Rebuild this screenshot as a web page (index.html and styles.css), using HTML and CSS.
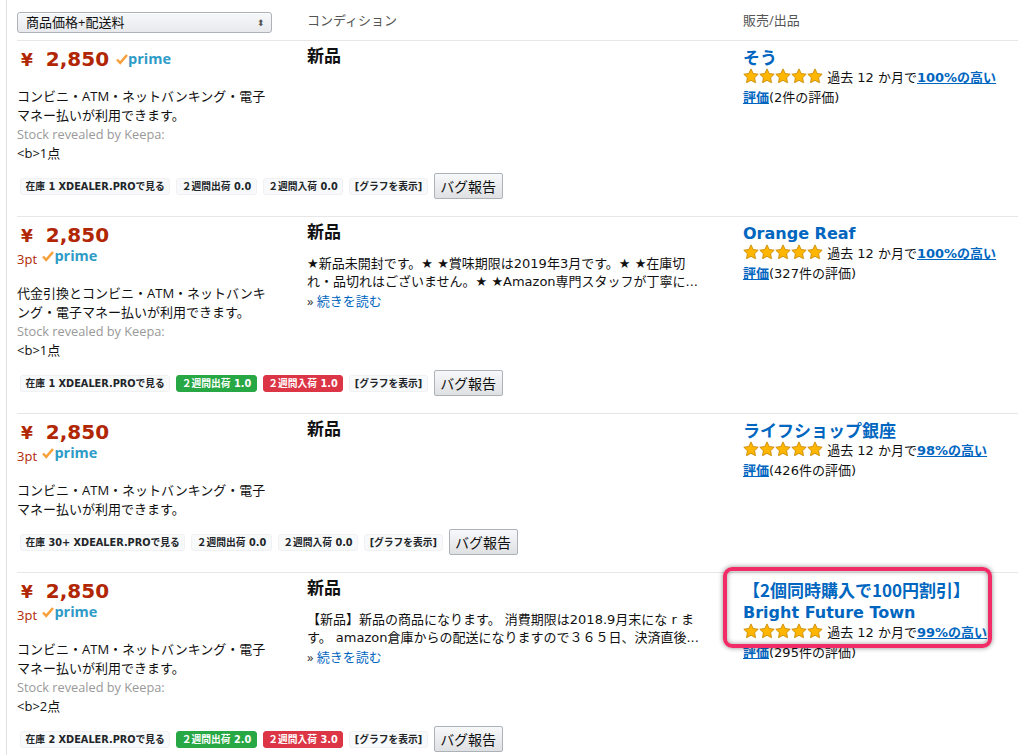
FILE: index.html
```html
<!DOCTYPE html>
<html lang="ja">
<head>
  <meta charset="UTF-8">
  <title>出品者一覧</title>
  <link rel="stylesheet" href="styles.css">
</head>
<body>
  <svg class="defs" width="0" height="0">
    <symbol id="star" viewBox="0 0 16 16">
      <path d="M8 .9l2.2 4.6 5 .7-3.6 3.5.9 5L8 12.3l-4.5 2.4.9-5L.8 6.2l5-.7z" fill="#ffb600" stroke="#c98a05" stroke-width=".9" stroke-linejoin="round"/>
    </symbol>
    <symbol id="check" viewBox="0 0 12 12">
      <path d="M1 6.5l3.2 3.4L11 2" fill="none" stroke="#f7a03c" stroke-width="2.5"/>
    </symbol>
  </svg>

  <div class="list">
    <div class="row head">
      <div class="col-price">
        <div class="sort"><span>商品価格+配送料</span><span class="sort-arrows">⬍</span></div>
      </div>
      <div class="col-cond">コンディション</div>
      <div class="col-seller">販売/出品</div>
    </div>

    <div class="row">
      <div class="col-price">
        <div class="price-line"><span class="price"><span class="yen">¥</span>2,850</span><span class="prime"><svg class="check"><use href="#check"/></svg>prime</span></div>
        <p class="desc first">コンビニ・ATM・ネットバンキング・電子<br>マネー払いが利用できます。</p>
        <p class="stock">Stock revealed by Keepa:</p>
        <p class="desc">&lt;b&gt;1点</p>
        <div class="tools">
          <span class="tag">在庫 1 XDEALER.PROで見る</span>
          <span class="tag">２週間出荷 0.0</span>
          <span class="tag">２週間入荷 0.0</span>
          <span class="tag">[グラフを表示]</span>
          <button class="bug">バグ報告</button>
        </div>
      </div>
      <div class="col-cond"><div class="cond">新品</div></div>
      <div class="col-seller">
        <a class="seller jp">そう</a>
        <div class="rating"><span class="stars"><svg><use href="#star"/></svg><svg><use href="#star"/></svg><svg><use href="#star"/></svg><svg><use href="#star"/></svg><svg><use href="#star"/></svg></span> 過去 12 か月で<a class="good">100%の高い評価</a>(2件の評価)</div>
      </div>
    </div>

    <div class="row">
      <div class="col-price">
        <div class="price-line"><span class="price"><span class="yen">¥</span>2,850</span></div>
        <div class="points">3pt <span class="prime"><svg class="check"><use href="#check"/></svg>prime</span></div>
        <p class="desc first">代金引換とコンビニ・ATM・ネットバンキ<br>ング・電子マネー払いが利用できます。</p>
        <p class="stock">Stock revealed by Keepa:</p>
        <p class="desc">&lt;b&gt;1点</p>
        <div class="tools">
          <span class="tag">在庫 1 XDEALER.PROで見る</span>
          <span class="tag green">２週間出荷 1.0</span>
          <span class="tag red">２週間入荷 1.0</span>
          <span class="tag">[グラフを表示]</span>
          <button class="bug">バグ報告</button>
        </div>
      </div>
      <div class="col-cond">
        <div class="cond">新品</div>
        <p class="note">★新品未開封です。★ ★賞味期限は2019年3月です。★ ★在庫切<br>れ・品切れはございません。★ ★Amazon専門スタッフが丁寧に...</p>
        <div class="more">» <a>続きを読む</a></div>
      </div>
      <div class="col-seller">
        <a class="seller">Orange Reaf</a>
        <div class="rating"><span class="stars"><svg><use href="#star"/></svg><svg><use href="#star"/></svg><svg><use href="#star"/></svg><svg><use href="#star"/></svg><svg><use href="#star"/></svg></span> 過去 12 か月で<a class="good">100%の高い評価</a>(327件の評価)</div>
      </div>
    </div>

    <div class="row">
      <div class="col-price">
        <div class="price-line"><span class="price"><span class="yen">¥</span>2,850</span></div>
        <div class="points">3pt <span class="prime"><svg class="check"><use href="#check"/></svg>prime</span></div>
        <p class="desc first">コンビニ・ATM・ネットバンキング・電子<br>マネー払いが利用できます。</p>
        <div class="tools">
          <span class="tag">在庫 30+ XDEALER.PROで見る</span>
          <span class="tag">２週間出荷 0.0</span>
          <span class="tag">２週間入荷 0.0</span>
          <span class="tag">[グラフを表示]</span>
          <button class="bug">バグ報告</button>
        </div>
      </div>
      <div class="col-cond"><div class="cond">新品</div></div>
      <div class="col-seller">
        <a class="seller jp">ライフショップ銀座</a>
        <div class="rating"><span class="stars"><svg><use href="#star"/></svg><svg><use href="#star"/></svg><svg><use href="#star"/></svg><svg><use href="#star"/></svg><svg><use href="#star"/></svg></span> 過去 12 か月で<a class="good">98%の高い評価</a>(426件の評価)</div>
      </div>
    </div>

    <div class="row last">
      <div class="col-price">
        <div class="price-line"><span class="price"><span class="yen">¥</span>2,850</span></div>
        <div class="points">3pt <span class="prime"><svg class="check"><use href="#check"/></svg>prime</span></div>
        <p class="desc first">コンビニ・ATM・ネットバンキング・電子<br>マネー払いが利用できます。</p>
        <p class="stock">Stock revealed by Keepa:</p>
        <p class="desc">&lt;b&gt;2点</p>
        <div class="tools">
          <span class="tag">在庫 2 XDEALER.PROで見る</span>
          <span class="tag green">２週間出荷 2.0</span>
          <span class="tag red">２週間入荷 3.0</span>
          <span class="tag">[グラフを表示]</span>
          <button class="bug">バグ報告</button>
        </div>
      </div>
      <div class="col-cond">
        <div class="cond">新品</div>
        <p class="note">【新品】新品の商品になります。 消費期限は2018.9月末にな r ま<br>す。 amazon倉庫からの配送になりますので３６５日、決済直後...</p>
        <div class="more">» <a>続きを読む</a></div>
      </div>
      <div class="col-seller">
        <a class="seller"><span class="jp">【2個同時購入で100円割引】</span><br>Bright Future Town</a>
        <div class="rating"><span class="stars"><svg><use href="#star"/></svg><svg><use href="#star"/></svg><svg><use href="#star"/></svg><svg><use href="#star"/></svg><svg><use href="#star"/></svg></span> 過去 12 か月で<a class="good">99%の高い評価</a>(295件の評価)</div>
      </div>
      <div class="callout"></div>
    </div>
  </div>
</body>
</html>
```

FILE: styles.css
```css
* {
  box-sizing: border-box;
}

html, body {
  height: 755px;
  overflow: hidden;
}

body {
  margin: 0;
  background: #fff;
  color: #111;
  font-family: "Open Sans", "Noto Sans CJK JP", sans-serif;
  font-size: 13px;
}

.defs {
  position: absolute;
}

.list {
  margin-left: 6px;
  padding-left: 10px;
  border-left: 1px solid #e0e0e0;
  height: 755px;
}

.row {
  display: flex;
  position: relative;
  border-top: 1px solid #e7e7e7;
}

.head {
  border-top: 0;
  height: 40px;
  padding-top: 11px;
  color: #555;
  line-height: 19px;
}

.col-price {
  width: 290px;
  flex: none;
}

.col-cond {
  width: 436px;
  flex: none;
}

.col-seller {
  width: 256px;
  flex: none;
}

.sort {
  display: flex;
  justify-content: space-between;
  align-items: center;
  width: 255px;
  height: 21px;
  margin-top: 1px;
  padding: 0 6px 0 8px;
  border: 1px solid #adb1b8;
  border-radius: 3px;
  background: linear-gradient(#f7f8fa, #e7e9ec);
  color: #111;
  box-shadow: 0 1px 0 rgba(255, 255, 255, 0.6) inset;
}

.sort-arrows {
  font-size: 9px;
  color: #555;
}

.price-line {
  display: flex;
  align-items: center;
  height: 24px;
  margin-top: 6px;
}

.price {
  margin-left: 4px;
  color: #b12704;
  font-family: "DejaVu Sans", sans-serif;
  font-size: 20px;
  font-weight: bold;
}

.yen {
  margin-right: 13px;
  font-size: 17px;
}

.prime {
  color: #2f9bc7;
  font-size: 14.5px;
  font-weight: 700;
}

.price-line .prime {
  margin-left: 7px;
  margin-top: -2px;
}

.points .prime {
  position: relative;
  top: -3px;
  margin-left: 2px;
}

.check {
  width: 12px;
  height: 12px;
  vertical-align: -1px;
}

.points {
  height: 21px;
  margin-top: 1px;
  color: #b12704;
  line-height: 22px;
}

.desc, .stock {
  margin: 0;
  line-height: 19px;
}

.desc.first {
  margin-top: 16px;
}

.points + .desc.first {
  margin-top: 15px;
}

.stock {
  color: #999;
  font-size: 12.75px;
}

.tools {
  display: flex;
  align-items: center;
  gap: 6px;
  height: 26px;
  margin: 10px 0 17px 3px;
}

.last .tools {
  margin-bottom: 0;
}

.tag {
  display: block;
  flex: none;
  padding: 0 4.5px;
  height: 17px;
  border: 1px solid #f1f1f3;
  border-radius: 3px;
  background: #f8f9fa;
  color: #212529;
  font-family: "DejaVu Sans", "Noto Sans CJK JP", sans-serif;
  font-size: 9.75px;
  font-weight: bold;
  line-height: 15px;
  white-space: nowrap;
}

.tag.green {
  background: #28a745;
  border-color: #28a745;
  color: #fff;
}

.tag.red {
  background: #dc3545;
  border-color: #dc3545;
  color: #fff;
}

.bug {
  flex: none;
  height: 26px;
  width: 69px;
  padding: 0;
  border: 1px solid #adb1b8;
  border-radius: 2px;
  background: linear-gradient(#f7f8fa, #dfe0e2);
  color: #111;
  font-family: inherit;
  font-size: 14px;
  white-space: nowrap;
}

.cond {
  margin-top: 4px;
  font-size: 17px;
  font-weight: bold;
  line-height: 22px;
}

.note {
  margin: 12px 0 0;
  font-family: "DejaVu Sans", "Noto Sans CJK JP", sans-serif;
  line-height: 18px;
  white-space: nowrap;
}

.more {
  color: #333;
  line-height: 20px;
}

.more a, .seller, .good {
  color: #0066c0;
}

.seller {
  display: block;
  margin-top: 6px;
  font-family: "DejaVu Sans", "Noto Sans CJK JP", sans-serif;
  font-size: 16px;
  font-weight: bold;
  line-height: 21px;
}

.jp {
  font-family: "Noto Sans CJK JP", sans-serif;
  font-size: 17px;
}

.seller.jp {
  margin-top: 5px;
  margin-bottom: 1px;
}

.rating {
  font-family: "DejaVu Sans", "Noto Sans CJK JP", sans-serif;
  line-height: 20px;
}

.stars {
  display: inline-flex;
  vertical-align: -2px;
}

.stars svg {
  width: 16px;
  height: 16px;
}

.good {
  font-weight: bold;
  text-decoration: underline;
}

.callout {
  position: absolute;
  left: 706px;
  top: -6px;
  width: 269px;
  height: 81px;
  border: 4px solid #f22c66;
  border-radius: 9px;
  box-shadow: 0 0 5px rgba(0, 0, 0, 0.45), inset 0 0 5px rgba(0, 0, 0, 0.4);
}
```
